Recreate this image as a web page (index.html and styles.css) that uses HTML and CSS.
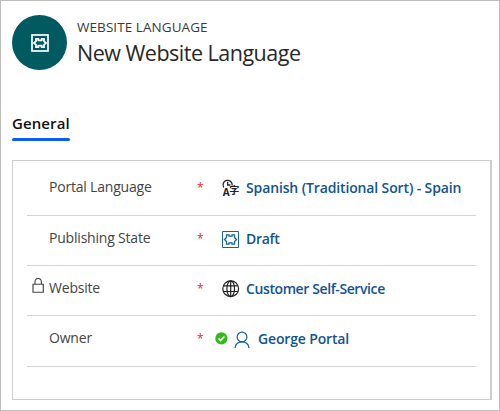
FILE: index.html
```html
<!DOCTYPE html>
<html lang="en">
<head>
<meta charset="utf-8">
<title>New Website Language</title>
<link rel="stylesheet" href="styles.css">
</head>
<body>
<main class="page">
  <header class="header">
    <div class="avatar">
      <svg width="18" height="18" viewBox="0 0 18 18" fill="none" stroke="#fff"><rect x="1" y="1" width="16" height="16" stroke-width="1.7"/><path d="M5 4.900H7.300V6.300H10.700V4.900H13V7.200L15 9 13 10.800v2.300H10.700V11.700H7.300v1.400H5v-2.300L3 9 5 7.200Z" stroke-width="1.800"/></svg>
    </div>
    <div class="heading">
      <div class="entity"><span>WEBSITE LANGUAGE</span></div>
      <h1 class="title"><span>New Website Language</span></h1>
    </div>
  </header>
  <nav class="tabs"><a class="tab">General</a></nav>
  <section class="panel">
    <div class="row first">
      <span class="lock"></span>
      <span class="label portal">Portal Language</span><span class="required">*</span>
      <span class="value"><svg class="icon" width="18" height="18" viewBox="0 0 18 18" fill="none" stroke="#222" stroke-width="1.3"><path d="M1.800 8.500A4.600 4.600 0 1 1 10.200 6.500M5.600 2.800v3.200h2.800"/><g fill="#222" stroke="none"><text class="latin" x=".8" y="17">A</text><text class="cjk" x="7.300" y="15">字</text></g></svg><span class="link spanish">Spanish (Traditional Sort) - Spain</span></span>
    </div>
    <div class="row second">
      <span class="lock"></span>
      <span class="label publishing">Publishing State</span><span class="required">*</span>
      <span class="value"><svg class="icon lower" width="18" height="18" viewBox="0 0 18 18" fill="none" stroke="#17629f"><path d="M.5.5h16v16H.5Z"/><path d="M4.500 3.800H7V5.100H10V3.800h2.500V6.500L14.500 8.500 12.500 10.500v2.700H10V11.900H7v1.300H4.500v-2.700L2.500 8.500 4.500 6.500Z" stroke-width="1.300"/></svg><span class="link draft">Draft</span></span>
    </div>
    <div class="row third">
      <span class="lock"><svg width="13" height="16" viewBox="0 0 13 16" fill="none" stroke="#444" stroke-width="1.15"><path d="M1 6.200h10.300v8H1ZM3 6.200V3.700a3.200 3.200 0 0 1 6.400 0v2.500"/></svg></span>
      <span class="label website">Website</span><span class="required">*</span>
      <span class="value"><svg class="icon" width="18" height="18" viewBox="0 0 18 18" fill="none" stroke="#202020" stroke-width="1.2"><circle cx="8.700" cy="8.700" r="7.900"/><ellipse cx="8.700" cy="8.700" rx="3.800" ry="7.900"/><path d="M8.700.8v15.800M1.600 5.900h14.200M1.600 11.500h14.200"/></svg><span class="link customer">Customer Self-Service</span></span>
    </div>
    <div class="row fourth">
      <span class="lock"></span>
      <span class="label owner">Owner</span><span class="required">*</span>
      <span class="value person"><svg class="status" width="13" height="13" viewBox="0 0 13 13"><circle cx="6.400" cy="6.400" r="6.100" fill="#37b91d"/><path d="m3.600 6.500 2 2 3.800-4" fill="none" stroke="#fff" stroke-width="1.600"/></svg><svg class="user" width="16" height="18" viewBox="0 0 16 18" fill="none" stroke="#17629f" stroke-width="1.200"><circle cx="8" cy="6" r="4.900"/><path d="M1 17c.5-4 3.200-6.100 7-6.100s6.500 2.100 7 6.100"/></svg><span class="link george">George Portal</span></span>
    </div>
  </section>
</main>
</body>
</html>
```
FILE: styles.css
```css
* { box-sizing: border-box; }
body { margin: 0; font-family: "Open Sans", "Noto Sans", sans-serif; background: #fff; }
.page { width: 500px; height: 411px; border: 1px solid #bdbdbd; padding: 14px 8px 0 11px; overflow: hidden; }
.header { display: flex; height: 55px; gap: 10px; }
.avatar { width: 55px; height: 55px; border-radius: 50%; background: #005b60; display: flex; align-items: center; justify-content: center; }
.heading { padding-top: 2px; white-space: nowrap; }
.entity { font-size: 13.5px; line-height: 20px; color: #3b3a39; letter-spacing: .07px; }
.title { margin: 1px 0 0; font-size: 21.5px; line-height: 30px; font-weight: 400; color: #292827; letter-spacing: -.5px; }
.tabs { display: flex; margin-top: 43px; }
.tab { height: 28px; line-height: 20px; font-size: 15px; font-weight: 600; color: #111; letter-spacing: .1px; position: relative; }
.tab::after { content: ""; position: absolute; left: 0; right: 0; bottom: 0; height: 3px; border-radius: 2px; background: #0b5cff; }
.panel { margin-top: 19px; width: 480px; height: 240px; border: 1px solid #cecece; border-right-width: 2px; padding: 0 14px; }
.row { display: grid; grid-template-columns: 22px 148px 25px 1fr; height: 50px; border-bottom: 1px solid #d4d4d4; white-space: nowrap; line-height: 20px; padding-top: 12px; }
.first { height: 55px; padding-top: 16px; }
.fourth { height: 51px; }
.label { font-size: 14px; color: #444; letter-spacing: -.2px; }
.required { font-size: 12px; line-height: 22px; color: #e5252d; }
.lock { padding: 0 0 0 5px; }
.lock svg { display: block; }
.value { display: flex; }
.icon { margin-top: 2px; margin-right: 6px; overflow: visible; }
.lower { margin-top: 3px; }
.link { font-size: 14px; font-weight: 600; color: #115394; padding-top: 1px; }
.spanish { letter-spacing: -.13px; }
.draft { letter-spacing: -.3px; }
.customer { letter-spacing: -.4px; }
.george { letter-spacing: -.15px; }
.person { margin-left: -7px; }
.status { margin: 4px 6px 0 0; }
.user { margin: 3px 8px 0 0; }
.latin { font: 700 10px "Open Sans", sans-serif; }
.cjk { font: 700 10px/1 "Noto Sans CJK SC", sans-serif; }
```
